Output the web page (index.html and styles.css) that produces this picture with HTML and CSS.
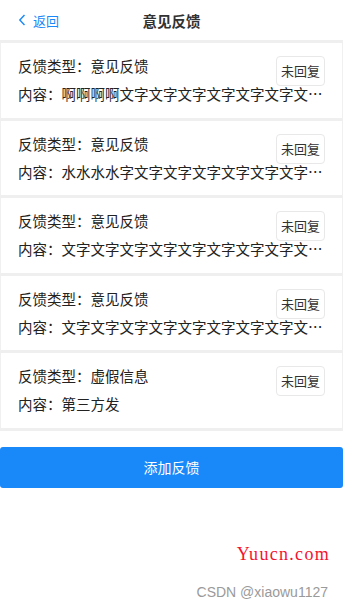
FILE: index.html
```html
<!DOCTYPE html>
<html lang="zh">
<head>
<meta charset="utf-8">
<link rel="stylesheet" href="styles.css">
</head>
<body>
<div class="page">
  <header class="nav">
    <div class="back">
      <svg class="chev" width="8" height="12" viewBox="0 0 8 12"><path d="M6.5 1 L1.8 6 L6.5 11" fill="none" stroke="#1989fa" stroke-width="1.4"/></svg>
      <span>返回</span>
    </div>
    <div class="title">意见反馈</div>
  </header>
  <div class="list">
    <div class="card">
      <div class="row"><span class="type">反馈类型：意见反馈</span><span class="badge">未回复</span></div>
      <div class="content">内容：啊啊啊啊文字文字文字文字文字文字文字文字文字文字</div>
    </div>
    <div class="card">
      <div class="row"><span class="type">反馈类型：意见反馈</span><span class="badge">未回复</span></div>
      <div class="content">内容：水水水水字文字文字文字文字文字文字文字文字文字</div>
    </div>
    <div class="card">
      <div class="row"><span class="type">反馈类型：意见反馈</span><span class="badge">未回复</span></div>
      <div class="content">内容：文字文字文字文字文字文字文字文字文字文字文字</div>
    </div>
    <div class="card">
      <div class="row"><span class="type">反馈类型：意见反馈</span><span class="badge">未回复</span></div>
      <div class="content">内容：文字文字文字文字文字文字文字文字文字文字文字文字</div>
    </div>
    <div class="card">
      <div class="row"><span class="type">反馈类型：虚假信息</span><span class="badge">未回复</span></div>
      <div class="content">内容：第三方发</div>
    </div>
  </div>
  <button class="add">添加反馈</button>
  <div class="marks">
    <div class="yuucn">Yuucn.com</div>
    <div class="csdn">CSDN @xiaowu1127</div>
  </div>
</div>
</body>
</html>
```
FILE: styles.css
```css
* { box-sizing: border-box; }
html, body { margin: 0; padding: 0; background: #fff; }
body {
  font-family: "Noto Sans CJK SC", "Noto Sans", sans-serif;
  color: #222;
  width: 343px;
  height: 607px;
  overflow: hidden;
}
.nav {
  height: 40px;
  display: flex;
  align-items: center;
  justify-content: center;
  position: relative;
}
.back {
  position: absolute;
  left: 18px;
  top: 0;
  height: 40px;
  display: flex;
  align-items: center;
  gap: 7px;
  color: #1989fa;
  font-size: 13px;
}
.title {
  font-size: 14.5px;
  font-weight: bold;
  color: #323233;
}
.list {
  border-top: 3px solid #efefef;
}
.card {
  padding: 13px 17px 13.5px 18px;
  border-bottom: 3px solid #efefef;
  border-left: 1px solid #f0f0f0;
  border-right: 1px solid #f0f0f0;
  display: flex;
  flex-direction: column;
  gap: 8px;
}
.row {
  display: flex;
  align-items: flex-start;
  justify-content: space-between;
  height: 20px;
}
.type {
  font-size: 14.5px;
  line-height: 20px;
  margin-left: -1px;
}
.badge {
  height: 30px;
  width: 49px;
  border: 1px solid #e8e8e8;
  border-radius: 4px;
  font-size: 13px;
  line-height: 28px;
  text-align: center;
  color: #333;
}
.content {
  font-size: 14.5px;
  line-height: 20px;
  margin-left: -1px;
  white-space: nowrap;
  overflow: hidden;
  text-overflow: ellipsis;
  width: 308px;
}
.add {
  display: block;
  width: 343px;
  height: 40.5px;
  margin: 16.5px 0 0;
  border: none;
  border-radius: 3px;
  background: #1989fa;
  color: #fff;
  font-family: "Noto Sans CJK SC", sans-serif;
  font-size: 14px;
}
.marks {
  display: flex;
  flex-direction: column;
  align-items: flex-end;
  padding-right: 13px;
}
.yuucn {
  margin-top: 56px;
  font-family: "Liberation Serif", serif;
  font-size: 18px;
  color: #f5122e;
  letter-spacing: 1.3px;
  line-height: 20px;
}
.csdn {
  margin-top: 20px;
  font-family: "Liberation Sans", sans-serif;
  font-size: 14px;
  color: #9a9a9a;
  line-height: 16px;
  margin-right: 2px;
}
```
